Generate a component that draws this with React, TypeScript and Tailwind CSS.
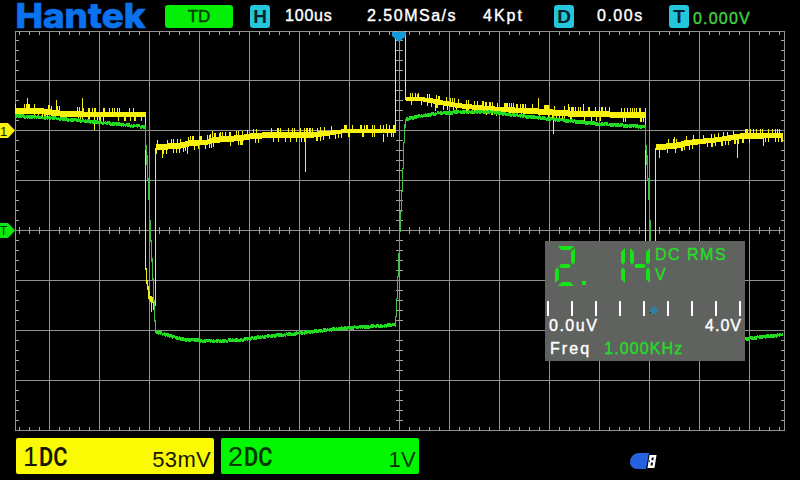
type Point = [number, number];
type Band = [number, number, number];

const SANS = "font-['Liberation_Sans',Arial,sans-serif]";

const GRID_X = [15, 49, 99, 149, 199, 249, 299, 349, 399, 449, 499, 549, 599, 649, 699, 749, 784];
const GRID_Y = [31, 80, 130, 180, 230, 280, 330, 380, 430];

// small repeatable noise so the traces look the same on every render
const noise = (n: number) => {
  const v = Math.sin(n * 127.1 + 11.7) * 43758.5453;
  return v - Math.floor(v);
};

const interpolate = (points: number[][], x: number, index: number) => {
  for (let i = 1; i < points.length; i++) {
    if (x <= points[i][0]) {
      const a = points[i - 1];
      const b = points[i];
      return a[index] + ((b[index] - a[index]) * (x - a[0])) / (b[0] - a[0]);
    }
  }
  return points[points.length - 1][index];
};

// [x, top, bottom] of the solid part of channel 1
const CH1_BANDS: Band[][] = [
  [[15, 108, 114], [40, 108, 114], [54, 110, 116], [65, 111, 117], [100, 112, 117], [145, 112, 117]],
  [[156, 144, 150], [178, 143, 149], [190, 140, 146], [205, 140, 145], [213, 137, 143], [240, 135, 141], [252, 133, 139], [270, 132, 138], [310, 132, 138], [325, 131, 136], [345, 129, 133], [395, 129, 133]],
  [[406, 97, 101], [420, 97, 101], [430, 98, 103], [445, 101, 106], [465, 104, 109], [490, 106, 111], [500, 107, 112], [530, 108, 114], [560, 110, 116], [575, 111, 117], [645, 112, 118]],
  [[656, 144, 150], [675, 143, 149], [685, 140, 146], [710, 138, 143], [718, 137, 142], [742, 133, 139], [782, 133, 138]],
];

const CH1_SPIKES: [number, number, number][] = [
  [27, 98, 110], [56, 100, 112], [82, 98, 114], [94, 114, 130], [162, 146, 158],
  [187, 142, 154], [212, 131, 140], [305, 134, 172], [383, 134, 142], [386, 124, 130],
  [417, 94, 100], [435, 101, 111], [538, 98, 110], [553, 112, 134], [568, 104, 113], [583, 104, 113],
  [659, 146, 158], [674, 137, 145], [737, 136, 158], [763, 134, 146], [145, 115, 122],
];

const CH2_CURVES: Point[][] = [
  [[15, 116], [50, 118], [95, 122], [145, 127]],
  [[156, 332], [170, 336], [185, 340], [215, 341], [240, 340], [260, 337], [300, 333], [345, 328], [395, 325]],
  [[406, 119], [420, 116], [440, 113], [465, 112], [490, 112], [530, 117], [560, 120], [600, 124], [645, 127]],
  [[745, 339], [760, 337], [782, 335]],
];

const ch1Path = () => {
  let d = "";
  CH1_BANDS.forEach((band) => {
    const end = band[band.length - 1][0];
    for (let x = band[0][0]; x <= end; x++) {
      const n = noise(x);
      const m = noise(x + 900);
      const top = Math.round(interpolate(band, x, 1)) - (n > 0.74 ? 4 : 0);
      const bottom = Math.round(interpolate(band, x, 2)) + (m > 0.84 ? 4 : 0);
      d += `M${x + 0.5} ${top}V${bottom}`;
    }
  });
  CH1_SPIKES.forEach(([x, top, bottom]) => {
    d += `M${x + 0.5} ${top}V${bottom}`;
  });
  return d;
};

const ch2Path = () => {
  let d = "";
  CH2_CURVES.forEach((curve) => {
    const end = curve[curve.length - 1][0];
    for (let x = curve[0][0]; x <= end; x++) {
      const y = Math.round(interpolate(curve, x, 1));
      const top = y - (noise(x + 300) > 0.2 ? 2 : 1);
      const bottom = y + (noise(x + 600) > 0.3 ? 2 : 1);
      d += `M${x + 0.5} ${top}V${bottom}`;
    }
  });
  return d;
};

const tickPath = () => {
  let d = "";
  for (let x = 19; x < 784; x += 10) {
    if (GRID_X.includes(x)) continue;
    d += `M${x + 0.5} 32V35M${x + 0.5} 227V234M${x + 0.5} 427V430`;
  }
  for (let y = 40; y < 430; y += 10) {
    if (GRID_Y.includes(y)) continue;
    d += `M16 ${y + 0.5}H19M396 ${y + 0.5}H403M781 ${y + 0.5}H784`;
  }
  return d;
};

const Graticule = () => (
  <g stroke="#929292" strokeWidth="1" fill="none" shapeRendering="crispEdges">
    {GRID_X.map((x) => <path key={x} d={`M${x + 0.5} 31V431`} />)}
    {GRID_Y.map((y) => <path key={y} d={`M15 ${y + 0.5}H785`} />)}
    <path d={tickPath()} stroke="#a5a5a5" />
  </g>
);

const Scope = () => (
  <svg width="800" height="400" viewBox="0 31 800 400" className="block">
    <Graticule />
    <g fill="none" strokeWidth="1" shapeRendering="crispEdges">
      <g stroke="#e9e66a">
        <path d="M145.5 118V270M155.5 148V306M395.5 31V131M405.5 31V100M645.5 115V260M655.5 148V260" />
      </g>
      <path d={ch1Path()} stroke="#f8f20c" />
      <path d="M146.5 268V284M147.5 280V290M148.5 286V299M149.5 291V300M150.5 296V302M151.5 296V312M152.5 297V303M153.5 299V310M154.5 301V307" stroke="#e9f021" />
      <path d={ch2Path()} stroke="#22dc22" />
      <g stroke="#43bd43">
        <path d="M145.5 127V150M146.5 145V165M147.5 155V180M148.5 178V200M149.5 198V224M150.5 220V242M151.5 240V262M152.5 258V280M153.5 278V302M154.5 300V322M155.5 320V333" />
        <path d="M395.5 316V326M396.5 298V317M397.5 276V299M398.5 253V277M399.5 230V254M400.5 211V232M401.5 191V212M402.5 168V192M403.5 142V169M404.5 124V143M405.5 119V128" />
        <path d="M645.5 127V150M646.5 145V165M647.5 155V180M648.5 178V200M649.5 198V224M650.5 220V242" />
      </g>
    </g>
    <path d="M392 32H406V36L399 42L392 36Z" fill="#149bd8" />
    <path d="M0 123H8L15 130.5L8 138H0Z" fill="#f8f20c" />
    <path d="M0 223H8L15 230.5L8 238H0Z" fill="#0cea0c" />
    <text x="0" y="135.5" fontSize="13" fill="#222200" fontFamily="Liberation Sans, sans-serif">1</text>
    <text x="0" y="235" fontSize="12" fill="#003800" fontFamily="Liberation Sans, sans-serif">T</text>
  </svg>
);

const Badge = ({ label }: { label: string }) => (
  <div className="flex h-[23px] w-5 items-center justify-center rounded-[3px] bg-[#24c6dc] text-[19px] font-bold leading-none text-[#06222a]">
    {label}
  </div>
);

const Header = () => (
  <header className="flex h-[31px] shrink-0 items-start whitespace-nowrap text-base leading-none text-white">
    <svg width="150" height="31" className="mr-[15px] shrink-0 overflow-visible">
      <text x="15.5" y="27.5" fontSize="34.5" fontWeight="800" textLength="130" lengthAdjust="spacingAndGlyphs" fill="#0a72ee" stroke="#0a72ee" strokeWidth="0.7" fontFamily="Inter, sans-serif">
        Hantek
      </text>
    </svg>
    <div className="mt-[5px] flex h-[23px] w-[68px] shrink-0 items-center justify-center rounded-[3px] bg-[#05ee05] text-[17px] text-[#043d04] [-webkit-text-stroke:0.5px]">
      TD
    </div>
    <div className="ml-[17px] mt-[5px] shrink-0"><Badge label="H" /></div>
    <span className="ml-[15px] mt-2 w-[82px] shrink-0 tracking-[0.8px] [-webkit-text-stroke:0.4px]">100us</span>
    <span className="mt-2 w-[116px] shrink-0 tracking-[1.5px] [-webkit-text-stroke:0.4px]">2.50MSa/s</span>
    <span className="mt-2 w-[71px] shrink-0 tracking-[2px] [-webkit-text-stroke:0.4px]">4Kpt</span>
    <div className="mt-[5px] shrink-0"><Badge label="D" /></div>
    <span className="ml-[23px] mt-2 w-[72px] shrink-0 tracking-[1.5px] [-webkit-text-stroke:0.4px]">0.00s</span>
    <div className="mt-[5px] shrink-0"><Badge label="T" /></div>
    <span className="ml-1 mt-[11px] tracking-[1.2px] text-[#3ed43e] [-webkit-text-stroke:0.4px]">0.000V</span>
  </header>
);

const SEGMENTS: Record<string, string> = {
  a: "M3 2H17L19 3L15 6H6Z",
  b: "M20 4V18L18 21L16 18V8Z",
  c: "M20 39V26L18 23L16 26V35Z",
  d: "M3 42L7 38H15L19 42Z",
  e: "M0 39V26L2 23L4 26V35Z",
  f: "M0 4V18L2 21L4 18V8Z",
  g: "M4 22L6 20H14L16 22L14 24H6Z",
};

const Digit = ({ segments, x }: { segments: string; x: number }) => (
  <g transform={`translate(${x} 0)`}>
    {segments.split("").map((s) => <path key={s} d={SEGMENTS[s]} />)}
  </g>
);

const Meter = () => (
  <section className="absolute left-[545px] top-[210px] flex h-[120px] w-[200px] flex-col bg-[#5f625f]">
    <div className="flex h-[60px] text-base leading-none text-[#26dc26]">
      <svg width="110" height="60" role="img" aria-label="2.14" fill="#16e416" className="shrink-0">
        <g transform="translate(0 3)">
          <Digit segments="abged" x={10} />
          <path d="M37 37H41V41H37Z" />
          <Digit segments="bc" x={60} />
          <Digit segments="fgbc" x={85} />
        </g>
      </svg>
      <div className="flex flex-col gap-1 whitespace-nowrap pt-1.5 tracking-[1.5px] [-webkit-text-stroke:0.4px]">
        <span>DC RMS</span>
        <span>V</span>
      </div>
    </div>
    <svg width="200" height="16" className="block shrink-0" shapeRendering="crispEdges">
      {[0, 1, 2, 3, 4, 5, 6, 7, 8].map((i) => (
        <rect key={i} x={2 + i * 24} y="0" width="2" height="15" fill="#fff" />
      ))}
      <path d="M106 7L109 5L111 6L113 9L111 13H107L105 11Z" fill="#2d819d" />
      <rect x="105" y="11" width="1" height="1" fill="#111" />
    </svg>
    <div className="mt-px flex justify-between pl-1 pr-[3px] text-base leading-none text-white [-webkit-text-stroke:0.4px]">
      <span className="tracking-[1.5px]">0.0uV</span>
      <span className="tracking-[1px]">4.0V</span>
    </div>
    <div className="mt-[7px] flex gap-[13px] pl-[5px] text-base leading-none text-white [-webkit-text-stroke:0.4px]">
      <span className="tracking-[2.1px]">Freq</span>
      <span className="tracking-[1.1px] text-[#26dc26]">1.000KHz</span>
    </div>
  </section>
);

const ChannelBox = ({ channel, scale, className }: { channel: string; scale: string; className: string }) => (
  <div className={`flex h-9 items-center justify-between rounded-[2px] leading-none ${className}`}>
    <div className="flex items-baseline pl-[7px] pt-0.5">
      <span className="w-4 text-[27px]">{channel}</span>
      <span className="w-7 origin-left scale-x-[0.87] font-['Roboto',sans-serif] text-[25px] font-semibold">DC</span>
    </div>
    <span className="pr-[3px] pt-[7px] text-[22px] tracking-[0.3px]">{scale}</span>
  </div>
);

const UsbIcon = () => (
  <svg width="30" height="20" className="ml-[210px] mt-[13px]">
    <path d="M10 2H20L17 18H8C4 18 1 15 1 11C1 6 5 2 10 2Z" fill="#2463dd" />
    <path d="M20.5 4H27.5L25.5 17H18.5Z" fill="#fff" />
    <path d="M22.8 6.5H24.8L24.3 9.3H22.3ZM22 11.5H24L23.5 14.5H21.5ZM20 9.5H21L20.8 11H19.8Z" fill="#050505" />
  </svg>
);

export default function App() {
  return (
    <main className={`flex h-[480px] w-[800px] flex-col overflow-hidden bg-black ${SANS}`}>
      <Header />
      <div className="relative h-[400px] shrink-0">
        <Scope />
        <Meter />
      </div>
      <footer className="flex items-start pl-4 pt-[7px]">
        <ChannelBox channel="1" scale="53mV" className="w-[198px] bg-[#fafa05] text-[#181800]" />
        <ChannelBox channel="2" scale="1V" className="ml-[7px] w-[198px] bg-[#02f802] text-[#023602]" />
        <UsbIcon />
      </footer>
    </main>
  );
}
